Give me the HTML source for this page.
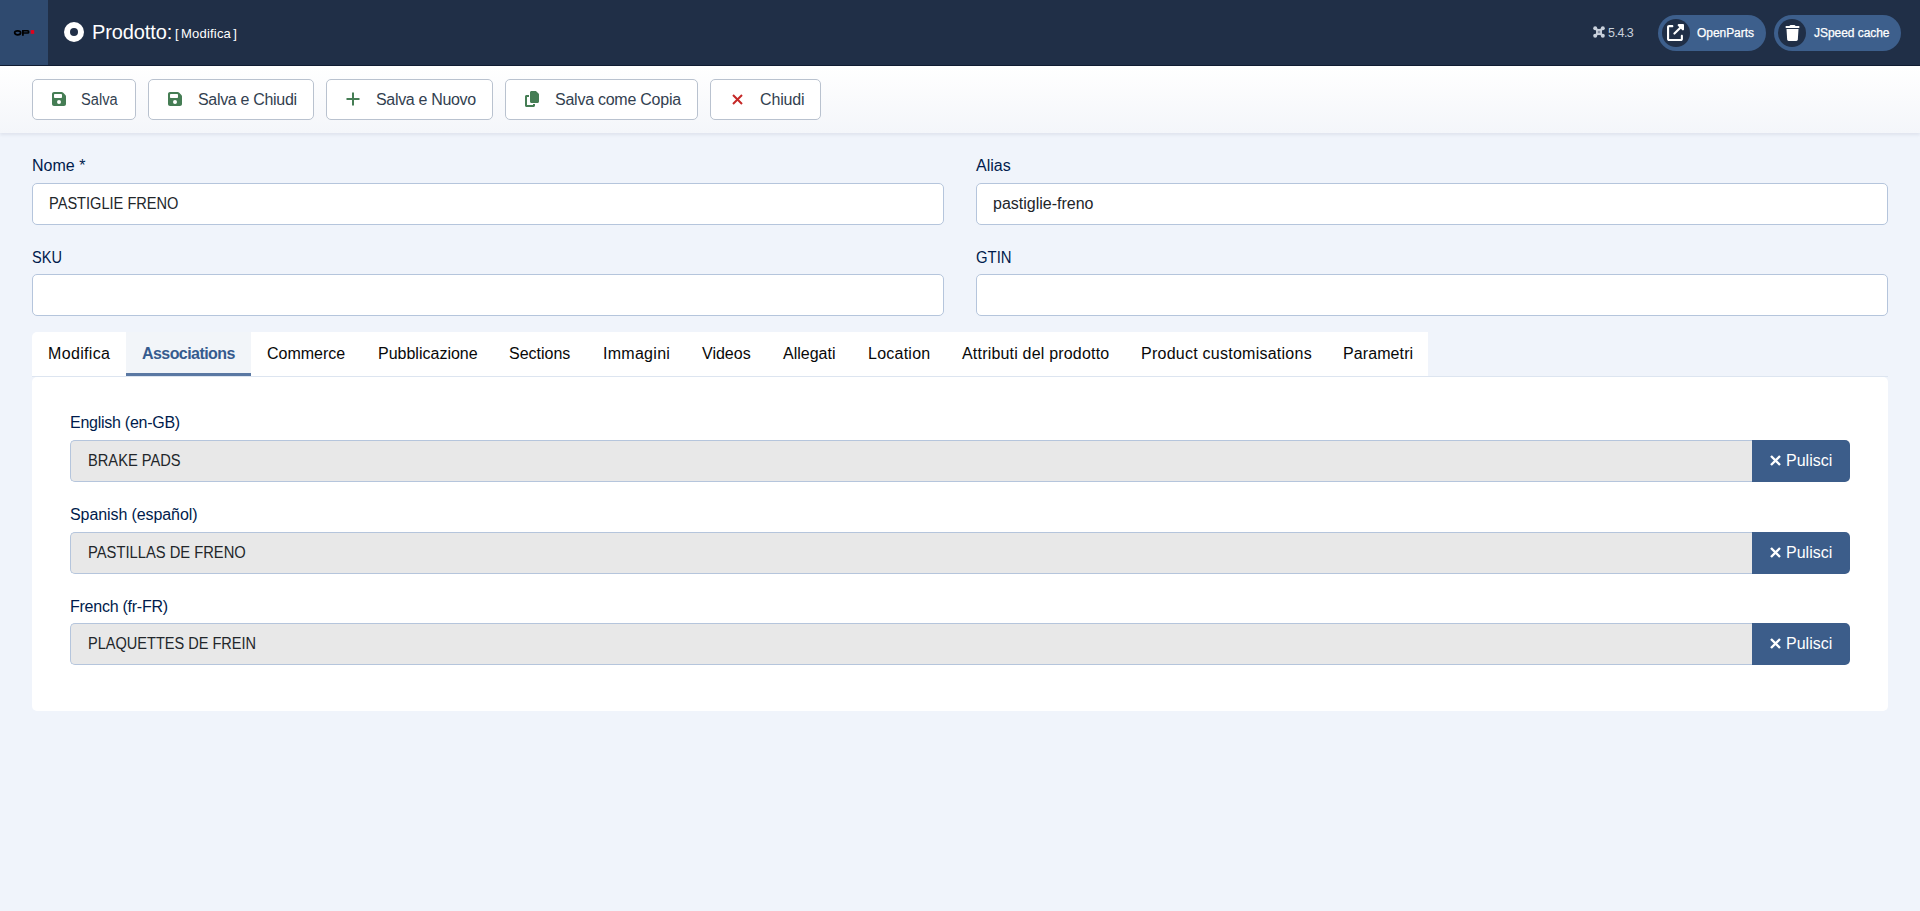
<!DOCTYPE html>
<html lang="it">
<head>
<meta charset="utf-8">
<title>Prodotto: Modifica</title>
<style>
*{box-sizing:border-box;}
html,body{margin:0;padding:0;}
body{width:1920px;height:911px;position:relative;overflow:hidden;background:#f0f4fb;font-family:"Liberation Sans",sans-serif;color:#22262a;}
.abs{position:absolute;}
/* header */
.header{position:absolute;left:0;top:0;width:1920px;height:66px;background:#202f47;box-shadow:inset 0 -1px 0 rgba(5,15,35,0.55);}
.logo{position:absolute;left:0;top:0;width:48px;height:65px;background:#2f4a6f;}
.title-ico{position:absolute;left:64px;top:22px;width:20px;height:20px;border-radius:50%;background:#fff;}
.title-ico:after{content:"";position:absolute;left:6px;top:6px;width:8px;height:8px;border-radius:50%;background:#202f47;}
.title{position:absolute;left:92px;top:19px;height:26px;line-height:26px;color:#fff;font-size:20px;white-space:nowrap;letter-spacing:-0.1px;}
.title2{position:absolute;left:175px;top:21px;height:26px;line-height:26px;color:#fff;font-size:13px;white-space:nowrap;letter-spacing:0.2px;word-spacing:-1.6px;}
.ver{position:absolute;left:1593px;top:25px;height:16px;line-height:16px;color:#c9d1dc;font-size:12.5px;white-space:nowrap;letter-spacing:-0.5px;}
.pill{position:absolute;top:15px;height:36px;border-radius:18px;background:#3d5f8c;color:#fff;font-size:12px;white-space:nowrap;}
.pill .c{position:absolute;left:4px;top:4px;width:28px;height:28px;border-radius:50%;background:#202f47;}
.pill .c svg{position:absolute;}
.pill .t{position:absolute;top:0;height:36px;line-height:36px;letter-spacing:-0.05px;-webkit-text-stroke:0.25px #fff;transform-origin:0 50%;}
/* toolbar */
.toolbar{position:absolute;left:0;top:66px;width:1920px;height:67px;background:linear-gradient(#ffffff,#f4f6fa);box-shadow:0 2px 3px rgba(20,40,80,0.08);}
.btn{position:absolute;top:13px;height:41px;border:1px solid #b9c2cf;border-radius:5px;background:#fff;color:#333f50;font-size:16px;white-space:nowrap;}
.btn svg{position:absolute;}
.btn .t{position:absolute;top:0;line-height:39px;}
/* form */
.lbl{position:absolute;height:20px;line-height:20px;font-size:16px;color:#001b4c;white-space:nowrap;}
.inp{position:absolute;height:42px;border:1px solid #b5c5dc;border-radius:5px;background:#fff;font-size:16px;color:#22262a;}
.inp .t{position:absolute;left:16px;top:0;line-height:40px;white-space:nowrap;}
/* tabs */
.tabs{position:absolute;left:32px;top:332px;width:1396px;height:44px;background:#fff;border-radius:5px 0 0 0;}
.tab{position:absolute;top:0;height:44px;line-height:44px;font-size:16px;color:#080808;white-space:nowrap;}
.tab.active{background:#f2f5f9;color:#365b8e;font-weight:bold;}
.tab.active:after{content:"";position:absolute;left:0;right:0;bottom:0;height:3px;background:#5a78a3;}
.tabline{position:absolute;left:32px;top:376px;width:1856px;height:1px;background:#dde5f0;}
.panel{position:absolute;left:32px;top:377px;width:1856px;height:334px;background:#fff;border-radius:5px;}
.grp{position:absolute;left:70px;width:1780px;height:42px;}
.grp .f{position:absolute;left:0;top:0;width:1682px;height:42px;background:#e8e8e8;border:1px solid #b5c5dc;border-right:0;border-radius:5px 0 0 5px;font-size:16px;color:#22262a;}
.grp .f .t{position:absolute;left:17px;top:0;line-height:40px;white-space:nowrap;}
.grp .b{position:absolute;left:1682px;top:0;width:98px;height:42px;background:#3c5d8a;border-radius:0 5px 5px 0;color:#fff;font-size:16px;}
.grp .b .t{position:absolute;left:34px;top:0;line-height:42px;white-space:nowrap;}
.grp .b svg{position:absolute;left:18px;top:15px;}
</style>
</head>
<body>

<div class="header">
  <div class="logo">
    <svg class="abs" style="left:13px;top:29px" width="23" height="8" viewBox="0 0 23 8">
      <ellipse cx="4.65" cy="3.85" rx="3.0" ry="2.0" fill="none" stroke="#000" stroke-width="1.7"/>
      <path fill="#000" fill-rule="evenodd" d="M9 1H14.6A1.95 1.9 0 0 1 14.6 4.8H10.8V6.7H9ZM10.8 2.5H14.3A0.5 0.4 0 0 1 14.3 3.3H10.8Z"/>
      <rect x="17.7" y="1.1" width="3.5" height="3.7" fill="#e3001b"/>
    </svg>
  </div>
  <div class="title-ico"></div>
  <div class="title">Prodotto:</div><div class="title2">[ Modifica ]</div>

  <div class="ver">
    <svg style="vertical-align:-1px;margin-right:3px" width="12" height="12" viewBox="0 0 12 12"><g fill="#c9d1dc"><circle cx="2.2" cy="2.2" r="2"/><circle cx="9.8" cy="2.2" r="2"/><circle cx="2.2" cy="9.8" r="2"/><circle cx="9.8" cy="9.8" r="2"/><path d="M2 2Q6 4.2 10 2Q7.8 6 10 10Q6 7.8 2 10Q4.2 6 2 2Z"/></g><path d="M6 4.4L7.6 6 6 7.6 4.4 6Z" fill="#7d879c"/></svg>5.4.3
  </div>

  <div class="pill" style="left:1658px;width:108px;">
    <div class="c">
      <svg style="left:5px;top:5px" width="17" height="17" viewBox="0 0 512 512"><path fill="#fff" d="M352 0c-12.9 0-24.6 7.8-29.6 19.8s-2.2 25.7 6.9 34.9L370.7 96 201.4 265.4c-12.5 12.5-12.5 32.8 0 45.3s32.8 12.5 45.3 0L416 141.3l41.4 41.4c9.2 9.2 22.9 11.9 34.9 6.9s19.8-16.6 19.8-29.6V32c0-17.7-14.3-32-32-32H352zM64 32C28.7 32 0 60.7 0 96V448c0 35.3 28.7 64 64 64H416c35.3 0 64-28.7 64-64V352c0-17.7-14.3-32-32-32s-32 14.3-32 32v96c0 0 0 0 0 0H64V96H160c17.7 0 32-14.3 32-32s-14.3-32-32-32H64z"/></svg>
    </div>
    <div class="t" style="left:39px">OpenParts</div>
  </div>
  <div class="pill" style="left:1774px;width:127px;">
    <div class="c">
      <svg style="left:7px;top:6px" width="15" height="16" viewBox="0 0 448 512"><path fill="#fff" d="M135.2 17.7L128 32H32C14.3 32 0 46.3 0 64S14.3 96 32 96H416c17.7 0 32-14.3 32-32s-14.3-32-32-32H320l-7.2-14.3C307.4 6.8 296.3 0 284.2 0H163.8c-12.1 0-23.2 6.8-28.6 17.7zM416 128H32L53.2 467c1.6 25.3 22.6 45 47.9 45H346.9c25.3 0 46.3-19.7 47.9-45L416 128z"/></svg>
    </div>
    <div class="t" style="left:40px">JSpeed cache</div>
  </div>
</div>

<div class="toolbar">
  <div class="btn" style="left:32px;width:104px;">
    <svg style="left:19px;top:12px" width="14" height="14" viewBox="0 32 448 448"><path fill="#457d54" d="M64 32C28.7 32 0 60.7 0 96V416c0 35.3 28.7 64 64 64H384c35.3 0 64-28.7 64-64V173.3c0-17-6.7-33.3-18.7-45.3L352 50.7C340 38.7 323.7 32 306.7 32H64zm0 96c0-17.7 14.3-32 32-32H288c17.7 0 32 14.3 32 32v64c0 17.7-14.3 32-32 32H96c-17.7 0-32-14.3-32-32V128zM224 288a64 64 0 1 1 0 128 64 64 0 1 1 0-128z"/></svg>
    <span class="t" style="left:48px;transform:scaleX(0.915);transform-origin:0 50%">Salva</span>
  </div>
  <div class="btn" style="left:148px;width:166px;">
    <svg style="left:19px;top:12px" width="14" height="14" viewBox="0 32 448 448"><path fill="#457d54" d="M64 32C28.7 32 0 60.7 0 96V416c0 35.3 28.7 64 64 64H384c35.3 0 64-28.7 64-64V173.3c0-17-6.7-33.3-18.7-45.3L352 50.7C340 38.7 323.7 32 306.7 32H64zm0 96c0-17.7 14.3-32 32-32H288c17.7 0 32 14.3 32 32v64c0 17.7-14.3 32-32 32H96c-17.7 0-32-14.3-32-32V128zM224 288a64 64 0 1 1 0 128 64 64 0 1 1 0-128z"/></svg>
    <span class="t" style="left:49px;letter-spacing:-0.32px">Salva e Chiudi</span>
  </div>
  <div class="btn" style="left:326px;width:167px;">
    <svg style="left:19px;top:12px" width="14" height="14" viewBox="0 0 14 14"><path d="M7 0.5V13.5M0.5 7H13.5" stroke="#457d54" stroke-width="2" fill="none"/></svg>
    <span class="t" style="left:49px;letter-spacing:-0.33px">Salva e Nuovo</span>
  </div>
  <div class="btn" style="left:505px;width:193px;">
    <svg style="left:19px;top:11px" width="14" height="16" viewBox="0 0 448 512"><path fill="#457d54" d="M208 0H332.1c12.7 0 24.9 5.1 33.9 14.1l67.9 67.9c9 9 14.1 21.2 14.1 33.9V336c0 26.5-21.5 48-48 48H208c-26.5 0-48-21.5-48-48V48c0-26.5 21.5-48 48-48zM48 128h80v64H64V448H256V416h64v48c0 26.5-21.5 48-48 48H48c-26.5 0-48-21.5-48-48V176c0-26.5 21.5-48 48-48z"/></svg>
    <span class="t" style="left:49px;letter-spacing:-0.25px">Salva come Copia</span>
  </div>
  <div class="btn" style="left:710px;width:111px;">
    <svg style="left:21px;top:14px" width="11" height="11" viewBox="0 0 11 11"><path d="M1 1L10 10M10 1L1 10" stroke="#c52827" stroke-width="2" fill="none"/></svg>
    <span class="t" style="left:49px;letter-spacing:-0.15px">Chiudi</span>
  </div>
</div>

<div class="lbl" style="left:32px;top:156px">Nome *</div>
<div class="inp" style="left:32px;top:183px;width:912px"><span class="t" style="transform:scaleX(0.912);transform-origin:0 50%">PASTIGLIE FRENO</span></div>
<div class="lbl" style="left:976px;top:156px">Alias</div>
<div class="inp" style="left:976px;top:183px;width:912px"><span class="t">pastiglie-freno</span></div>
<div class="lbl" style="left:32px;top:248px;transform:scaleX(0.91);transform-origin:0 50%">SKU</div>
<div class="inp" style="left:32px;top:274px;width:912px"></div>
<div class="lbl" style="left:976px;top:248px;transform:scaleX(0.93);transform-origin:0 50%">GTIN</div>
<div class="inp" style="left:976px;top:274px;width:912px"></div>

<div class="tabline"></div>
<div class="tabs">
  <div class="tab" style="left:16px;letter-spacing:0.34px">Modifica</div>
  <div class="tab active" style="left:94px;width:125px;padding-left:16px;letter-spacing:-0.57px">Associations</div>
  <div class="tab" style="left:235px">Commerce</div>
  <div class="tab" style="left:346px">Pubblicazione</div>
  <div class="tab" style="left:477px">Sections</div>
  <div class="tab" style="left:571px;letter-spacing:0.28px">Immagini</div>
  <div class="tab" style="left:670px">Videos</div>
  <div class="tab" style="left:751px">Allegati</div>
  <div class="tab" style="left:836px;letter-spacing:0.24px">Location</div>
  <div class="tab" style="left:930px;letter-spacing:0.19px">Attributi del prodotto</div>
  <div class="tab" style="left:1109px;letter-spacing:0.25px">Product customisations</div>
  <div class="tab" style="left:1311px;letter-spacing:0.1px">Parametri</div>
</div>

<div class="panel">
  <div class="lbl" style="left:38px;top:36px;letter-spacing:-0.26px">English (en-GB)</div>
  <div class="lbl" style="left:38px;top:128px;letter-spacing:-0.09px">Spanish (español)</div>
  <div class="lbl" style="left:38px;top:220px;letter-spacing:-0.25px">French (fr-FR)</div>
</div>

<div class="grp" style="top:440px">
  <div class="f"><span class="t" style="transform:scaleX(0.916);transform-origin:0 50%">BRAKE PADS</span></div>
  <div class="b"><svg width="11" height="11" viewBox="0 0 11 11"><path d="M1 1L10 10M10 1L1 10" stroke="#fff" stroke-width="2.4" fill="none"/></svg><span class="t">Pulisci</span></div>
</div>
<div class="grp" style="top:532px">
  <div class="f"><span class="t" style="transform:scaleX(0.921);transform-origin:0 50%">PASTILLAS DE FRENO</span></div>
  <div class="b"><svg width="11" height="11" viewBox="0 0 11 11"><path d="M1 1L10 10M10 1L1 10" stroke="#fff" stroke-width="2.4" fill="none"/></svg><span class="t">Pulisci</span></div>
</div>
<div class="grp" style="top:623px">
  <div class="f"><span class="t" style="transform:scaleX(0.909);transform-origin:0 50%">PLAQUETTES DE FREIN</span></div>
  <div class="b"><svg width="11" height="11" viewBox="0 0 11 11"><path d="M1 1L10 10M10 1L1 10" stroke="#fff" stroke-width="2.4" fill="none"/></svg><span class="t">Pulisci</span></div>
</div>

</body>
</html>
